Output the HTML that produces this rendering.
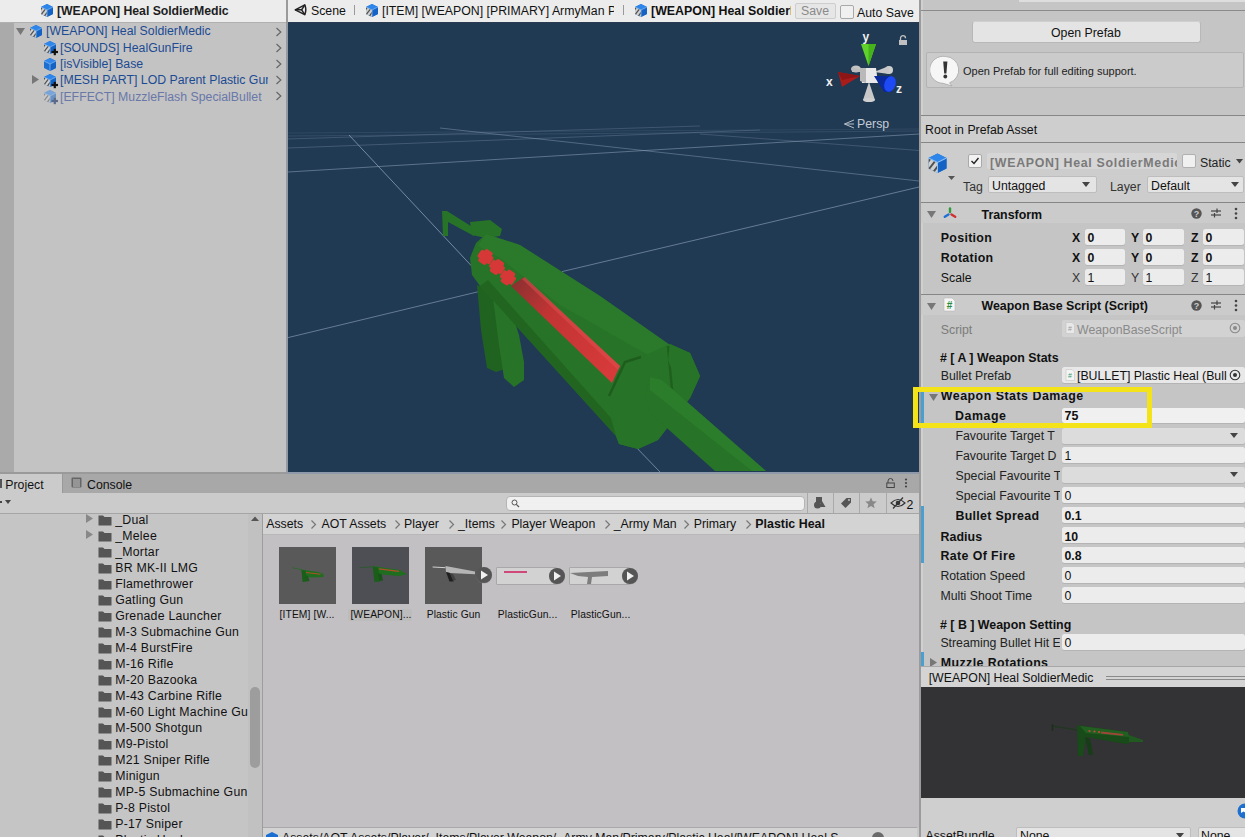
<!DOCTYPE html><html><head><meta charset="utf-8"><style>
html,body{margin:0;padding:0;}
body{width:1245px;height:837px;overflow:hidden;position:relative;background:#c8c8c8;font-family:"Liberation Sans",sans-serif;}
.t{position:absolute;white-space:nowrap;}
</style></head><body><div style="position:absolute;left:0px;top:0px;width:287px;height:22px;background:#ececec;"></div>
<div style="position:absolute;left:0px;top:22px;width:287px;height:1px;background:#b0b0b0;"></div>
<div style="position:absolute;left:0px;top:23px;width:287px;height:449px;background:#c4c3c4;"></div>
<div style="position:absolute;left:0px;top:23px;width:14px;height:449px;background:#aaaaaa;"></div>
<div style="position:absolute;left:286px;top:0px;width:2px;height:474px;background:#9a9a9a;"></div>
<svg style="position:absolute;left:40px;top:2.5px;" width="16" height="16" viewBox="0 0 16 16"><defs><clipPath id="cf1"><polygon points="1,4 7,7 7,14 1,11"/></clipPath></defs><g opacity="1"><polygon points="7,1 13,4 13,11 7,14 1,11 1,4" fill="#1a6fd1"/><polygon points="7,1 13,4 7,7 1,4" fill="#2f86ea"/><polygon points="7,7 13,4 13,11 7,14" fill="#1463c4"/><polygon points="1,4 7,7 7,14 1,11" fill="#d0d0d0"/><g clip-path="url(#cf1)" stroke="#505050" stroke-width="1.3"><line x1="-1" y1="9" x2="4" y2="2"/><line x1="0" y1="13" x2="7" y2="4"/><line x1="3" y1="15" x2="9" y2="7"/><line x1="6" y1="16" x2="10" y2="10"/></g><polyline points="1,4 7,7 13,4" fill="none" stroke="#8fc0f5" stroke-width="0.7"/><line x1="7" y1="7" x2="7" y2="14" stroke="#8fc0f5" stroke-width="0.7"/></g></svg>
<div class="t" style="left:57px;top:5.380000000000001px;font-size:12.3px;line-height:12.3px;color:#1e1e1e;font-weight:bold;letter-spacing:-0.05px">[WEAPON] Heal SoldierMedic</div>
<svg style="position:absolute;left:16px;top:27px;" width="10" height="10" viewBox="0 0 10 10"><polygon points="0,1 9,1 4.5,8" fill="#777"/></svg>
<svg style="position:absolute;left:29px;top:24px;" width="16" height="16" viewBox="0 0 16 16"><defs><clipPath id="cf2"><polygon points="1,4 7,7 7,14 1,11"/></clipPath></defs><g opacity="1"><polygon points="7,1 13,4 13,11 7,14 1,11 1,4" fill="#1a6fd1"/><polygon points="7,1 13,4 7,7 1,4" fill="#2f86ea"/><polygon points="7,7 13,4 13,11 7,14" fill="#1463c4"/><polygon points="1,4 7,7 7,14 1,11" fill="#d0d0d0"/><g clip-path="url(#cf2)" stroke="#505050" stroke-width="1.3"><line x1="-1" y1="9" x2="4" y2="2"/><line x1="0" y1="13" x2="7" y2="4"/><line x1="3" y1="15" x2="9" y2="7"/><line x1="6" y1="16" x2="10" y2="10"/></g><polyline points="1,4 7,7 13,4" fill="none" stroke="#8fc0f5" stroke-width="0.7"/><line x1="7" y1="7" x2="7" y2="14" stroke="#8fc0f5" stroke-width="0.7"/></g></svg>
<div class="t" style="left:46px;top:25.18px;font-size:12.3px;line-height:12.3px;color:#1b4b92;">[WEAPON] Heal SoldierMedic</div>
<svg style="position:absolute;left:43px;top:40px;" width="16" height="16" viewBox="0 0 16 16"><defs><clipPath id="cf3"><polygon points="1,4 7,7 7,14 1,11"/></clipPath></defs><g opacity="1"><polygon points="7,1 13,4 13,11 7,14 1,11 1,4" fill="#1a6fd1"/><polygon points="7,1 13,4 7,7 1,4" fill="#2f86ea"/><polygon points="7,7 13,4 13,11 7,14" fill="#1463c4"/><polygon points="1,4 7,7 7,14 1,11" fill="#d0d0d0"/><g clip-path="url(#cf3)" stroke="#505050" stroke-width="1.3"><line x1="-1" y1="9" x2="4" y2="2"/><line x1="0" y1="13" x2="7" y2="4"/><line x1="3" y1="15" x2="9" y2="7"/><line x1="6" y1="16" x2="10" y2="10"/></g><polyline points="1,4 7,7 13,4" fill="none" stroke="#8fc0f5" stroke-width="0.7"/><line x1="7" y1="7" x2="7" y2="14" stroke="#8fc0f5" stroke-width="0.7"/></g><g stroke="#111" stroke-width="2.2"><line x1="8.5" y1="12" x2="15" y2="12"/><line x1="11.8" y1="8.8" x2="11.8" y2="15.2"/></g></svg>
<div class="t" style="left:60px;top:41.68px;font-size:12.3px;line-height:12.3px;color:#1b4b92;">[SOUNDS] HealGunFire</div>
<svg style="position:absolute;left:43px;top:57px;" width="16" height="16" viewBox="0 0 16 16"><defs><clipPath id="cf4"><polygon points="1,4 7,7 7,14 1,11"/></clipPath></defs><g opacity="1"><polygon points="7,1 13,4 13,11 7,14 1,11 1,4" fill="#1a6fd1"/><polygon points="7,1 13,4 7,7 1,4" fill="#2f86ea"/><polygon points="7,7 13,4 13,11 7,14" fill="#1463c4"/><polyline points="1,4 7,7 13,4" fill="none" stroke="#8fc0f5" stroke-width="0.7"/><line x1="7" y1="7" x2="7" y2="14" stroke="#8fc0f5" stroke-width="0.7"/></g></svg>
<div class="t" style="left:60px;top:57.980000000000004px;font-size:12.3px;line-height:12.3px;color:#1b4b92;">[isVisible] Base</div>
<svg style="position:absolute;left:31px;top:75px;" width="10" height="10" viewBox="0 0 10 10"><polygon points="1,0 8,4.5 1,9" fill="#777"/></svg>
<svg style="position:absolute;left:43px;top:73px;" width="16" height="16" viewBox="0 0 16 16"><defs><clipPath id="cf5"><polygon points="1,4 7,7 7,14 1,11"/></clipPath></defs><g opacity="1"><polygon points="7,1 13,4 13,11 7,14 1,11 1,4" fill="#1a6fd1"/><polygon points="7,1 13,4 7,7 1,4" fill="#2f86ea"/><polygon points="7,7 13,4 13,11 7,14" fill="#1463c4"/><polygon points="1,4 7,7 7,14 1,11" fill="#d0d0d0"/><g clip-path="url(#cf5)" stroke="#505050" stroke-width="1.3"><line x1="-1" y1="9" x2="4" y2="2"/><line x1="0" y1="13" x2="7" y2="4"/><line x1="3" y1="15" x2="9" y2="7"/><line x1="6" y1="16" x2="10" y2="10"/></g><polyline points="1,4 7,7 13,4" fill="none" stroke="#8fc0f5" stroke-width="0.7"/><line x1="7" y1="7" x2="7" y2="14" stroke="#8fc0f5" stroke-width="0.7"/></g><g stroke="#111" stroke-width="2.2"><line x1="8.5" y1="12" x2="15" y2="12"/><line x1="11.8" y1="8.8" x2="11.8" y2="15.2"/></g></svg>
<div style="position:absolute;left:60px;top:70px;width:208px;height:18px;overflow:hidden">
<div class="t" style="left:0px;top:4.08px;font-size:12.3px;line-height:12.3px;color:#1b4b92;">[MESH PART] LOD Parent Plastic Gun</div>
</div>
<svg style="position:absolute;left:43px;top:89px;" width="16" height="16" viewBox="0 0 16 16"><defs><clipPath id="cf6"><polygon points="1,4 7,7 7,14 1,11"/></clipPath></defs><g opacity="0.5"><polygon points="7,1 13,4 13,11 7,14 1,11 1,4" fill="#1a6fd1"/><polygon points="7,1 13,4 7,7 1,4" fill="#2f86ea"/><polygon points="7,7 13,4 13,11 7,14" fill="#1463c4"/><polygon points="1,4 7,7 7,14 1,11" fill="#d0d0d0"/><g clip-path="url(#cf6)" stroke="#505050" stroke-width="1.3"><line x1="-1" y1="9" x2="4" y2="2"/><line x1="0" y1="13" x2="7" y2="4"/><line x1="3" y1="15" x2="9" y2="7"/><line x1="6" y1="16" x2="10" y2="10"/></g><polyline points="1,4 7,7 13,4" fill="none" stroke="#8fc0f5" stroke-width="0.7"/><line x1="7" y1="7" x2="7" y2="14" stroke="#8fc0f5" stroke-width="0.7"/></g><g stroke="#5a6a8a" stroke-width="2.2"><line x1="8.5" y1="12" x2="15" y2="12"/><line x1="11.8" y1="8.8" x2="11.8" y2="15.2"/></g></svg>
<div class="t" style="left:60px;top:90.58px;font-size:12.3px;line-height:12.3px;color:#6878a8;">[EFFECT] MuzzleFlash SpecialBullet</div>
<svg style="position:absolute;left:275px;top:26.8px;" width="8" height="10" viewBox="0 0 8 10"><polyline points="1.5,1 5.8,5 1.5,9" fill="none" stroke="#666" stroke-width="1.2"/></svg>
<svg style="position:absolute;left:275px;top:42.8px;" width="8" height="10" viewBox="0 0 8 10"><polyline points="1.5,1 5.8,5 1.5,9" fill="none" stroke="#666" stroke-width="1.2"/></svg>
<svg style="position:absolute;left:275px;top:58.6px;" width="8" height="10" viewBox="0 0 8 10"><polyline points="1.5,1 5.8,5 1.5,9" fill="none" stroke="#666" stroke-width="1.2"/></svg>
<svg style="position:absolute;left:275px;top:74.6px;" width="8" height="10" viewBox="0 0 8 10"><polyline points="1.5,1 5.8,5 1.5,9" fill="none" stroke="#666" stroke-width="1.2"/></svg>
<svg style="position:absolute;left:275px;top:90.8px;" width="8" height="10" viewBox="0 0 8 10"><polyline points="1.5,1 5.8,5 1.5,9" fill="none" stroke="#666" stroke-width="1.2"/></svg>
<div style="position:absolute;left:288px;top:0px;width:631px;height:22px;background:#ececec;"></div>
<div style="position:absolute;left:288px;top:22px;width:631px;height:1px;background:#2a3a50;"></div>
<svg style="position:absolute;left:293.5px;top:3.5px;" width="14" height="12" viewBox="0 0 14 12"><g fill="none" stroke="#222" stroke-width="1.5" stroke-linejoin="round"><path d="M1.2,5.8 L10.8,0.9 Q12.8,5.8 10.8,10.7 Z"/><polyline points="1.2,5.8 7.6,5.8 10.8,0.9"/><line x1="7.6" y1="5.8" x2="10.8" y2="10.7"/></g></svg>
<div class="t" style="left:311px;top:5.08px;font-size:12.3px;line-height:12.3px;color:#111;">Scene</div>
<div style="position:absolute;left:354px;top:5px;width:1px;height:10px;background:#999;"></div>
<svg style="position:absolute;left:365px;top:3px;" width="16" height="16" viewBox="0 0 16 16"><defs><clipPath id="cf7"><polygon points="1,4 7,7 7,14 1,11"/></clipPath></defs><g opacity="1"><polygon points="7,1 13,4 13,11 7,14 1,11 1,4" fill="#1a6fd1"/><polygon points="7,1 13,4 7,7 1,4" fill="#2f86ea"/><polygon points="7,7 13,4 13,11 7,14" fill="#1463c4"/><polygon points="1,4 7,7 7,14 1,11" fill="#d0d0d0"/><g clip-path="url(#cf7)" stroke="#505050" stroke-width="1.3"><line x1="-1" y1="9" x2="4" y2="2"/><line x1="0" y1="13" x2="7" y2="4"/><line x1="3" y1="15" x2="9" y2="7"/><line x1="6" y1="16" x2="10" y2="10"/></g><polyline points="1,4 7,7 13,4" fill="none" stroke="#8fc0f5" stroke-width="0.7"/><line x1="7" y1="7" x2="7" y2="14" stroke="#8fc0f5" stroke-width="0.7"/></g></svg>
<div style="position:absolute;left:382px;top:0;width:232px;height:22px;overflow:hidden">
<div class="t" style="left:0px;top:5.08px;font-size:12.3px;line-height:12.3px;color:#111;">[ITEM] [WEAPON] [PRIMARY] ArmyMan Primary</div>
</div>
<div style="position:absolute;left:623px;top:5px;width:1px;height:10px;background:#999;"></div>
<svg style="position:absolute;left:634px;top:3px;" width="16" height="16" viewBox="0 0 16 16"><defs><clipPath id="cf8"><polygon points="1,4 7,7 7,14 1,11"/></clipPath></defs><g opacity="1"><polygon points="7,1 13,4 13,11 7,14 1,11 1,4" fill="#1a6fd1"/><polygon points="7,1 13,4 7,7 1,4" fill="#2f86ea"/><polygon points="7,7 13,4 13,11 7,14" fill="#1463c4"/><polygon points="1,4 7,7 7,14 1,11" fill="#d0d0d0"/><g clip-path="url(#cf8)" stroke="#505050" stroke-width="1.3"><line x1="-1" y1="9" x2="4" y2="2"/><line x1="0" y1="13" x2="7" y2="4"/><line x1="3" y1="15" x2="9" y2="7"/><line x1="6" y1="16" x2="10" y2="10"/></g><polyline points="1,4 7,7 13,4" fill="none" stroke="#8fc0f5" stroke-width="0.7"/><line x1="7" y1="7" x2="7" y2="14" stroke="#8fc0f5" stroke-width="0.7"/></g></svg>
<div style="position:absolute;left:651px;top:0;width:140px;height:22px;overflow:hidden">
<div class="t" style="left:0px;top:5.0px;font-size:12.4px;line-height:12.4px;color:#111;font-weight:bold;">[WEAPON] Heal SoldierMedic</div>
</div>
<div style="position:absolute;left:795px;top:3px;width:41px;height:16px;background:#e6e6e6;border:1px solid #cdcdcd;box-sizing:border-box;border-radius:2px"></div>
<div class="t" style="left:801px;top:5.08px;font-size:12.3px;line-height:12.3px;color:#8a8a8a;">Save</div>
<div style="position:absolute;left:840px;top:5px;width:14px;height:14px;background:#f0f0f0;border:1px solid #a8a8a8;box-sizing:border-box;border-radius:2px"></div>
<div class="t" style="left:857px;top:7.279999999999999px;font-size:12.3px;line-height:12.3px;color:#111;">Auto Save</div>
<div style="position:absolute;left:288px;top:23px;width:631px;height:449px;background:#213a54;"></div>
<svg style="position:absolute;left:288px;top:23px;" width="631" height="449" viewBox="0 0 631 449"><svg viewBox="288 23 631 449" width="631" height="449" overflow="hidden"><line x1="288" y1="133" x2="919" y2="129" stroke="#8fa3ba" stroke-width="0.9" fill="none" opacity="0.15"/><line x1="288" y1="136" x2="919" y2="131" stroke="#8fa3ba" stroke-width="0.9" fill="none" opacity="0.2"/><line x1="288" y1="139" x2="700" y2="126" stroke="#8fa3ba" stroke-width="0.9" fill="none" opacity="0.3"/><line x1="288" y1="148" x2="760" y2="130" stroke="#8fa3ba" stroke-width="0.9" fill="none" opacity="0.35"/><line x1="288" y1="172" x2="919" y2="134" stroke="#8fa3ba" stroke-width="0.9" fill="none" opacity="0.6"/><line x1="349" y1="135" x2="480" y2="275" stroke="#8fa3ba" stroke-width="0.9" fill="none" opacity="0.85"/><line x1="633" y1="444" x2="660" y2="472" stroke="#8fa3ba" stroke-width="0.9" fill="none" opacity="0.8"/><line x1="440" y1="128" x2="919" y2="181" stroke="#8fa3ba" stroke-width="0.9" fill="none" opacity="0.5"/><line x1="700" y1="134" x2="919" y2="150.5" stroke="#8fa3ba" stroke-width="0.9" fill="none" opacity="0.3"/><line x1="562" y1="271.6" x2="919" y2="187" stroke="#8fa3ba" stroke-width="0.9" fill="none" opacity="0.7"/><line x1="288" y1="337.6" x2="480" y2="291.3" stroke="#8fa3ba" stroke-width="0.9" fill="none" opacity="0.7"/><polygon points="477,285 495,292 505,330 505,369 496,372 487,368 481,330" fill="#206220"/><polygon points="493,298 508,300 519,335 524,362 524,380 514,387 504,378 499,345" fill="#277327"/><polygon points="442,211 447,211 474,228 474,236 448,222 448,236 443,236" fill="#277327"/><polygon points="470,222 490,220 502,229 500,236 486,238 472,235" fill="#277327"/><polygon points="486,234 520,245 600,296 670,345 690,353 700,376 690,398 658,440 638,449 619,444 616,436 480,286 472,275 470,258 476,243" fill="#277327"/><polygon points="486,234 520,245 600,296 670,345 650,356 560,305 500,258 478,246" fill="#2f822f" opacity="0.5"/><polygon points="480,286 616,436 611,418 488,280" fill="#206220" opacity="0.8"/><defs><linearGradient id="rs" x1="512" y1="280" x2="618" y2="374" gradientUnits="userSpaceOnUse"><stop offset="0" stop-color="#8a3030"/><stop offset="0.35" stop-color="#c23434"/><stop offset="1" stop-color="#d83a3a"/></linearGradient></defs><polygon points="511,286 524,277 620,366 612,383" fill="url(#rs)"/><polygon points="522,279 525,277 620,366 618,370" fill="#e05050" opacity="0.5"/><g transform="rotate(35 485.5 257)" fill="#d63838"><rect x="478.0" y="252.5" width="15" height="9" rx="2"/><rect x="481.0" y="249.5" width="9" height="15" rx="2"/></g><g transform="rotate(35 497 267)" fill="#d63838"><rect x="489.5" y="262.5" width="15" height="9" rx="2"/><rect x="492.5" y="259.5" width="9" height="15" rx="2"/></g><g transform="rotate(35 508 277.5)" fill="#d63838"><rect x="500.5" y="273.0" width="15" height="9" rx="2"/><rect x="503.5" y="270.0" width="9" height="15" rx="2"/></g><polygon points="609,396 625,362 641,357 670,344 690,353 700,376 690,398 658,440 638,449 619,444 616,436" fill="#277327"/><polyline points="609,396 625,362 641,357" fill="none" stroke="#174a17" stroke-width="2.5" opacity="0.55"/><line x1="668" y1="346" x2="672" y2="390" stroke="#174a17" stroke-width="2.5" opacity="0.45"/><polygon points="670,344 690,353 700,376 690,398 676,380 668,360" fill="#277327"/><polygon points="650,377 662,380 766,471 715,471 650,413 645,395" fill="#277327"/><polygon points="650,377 662,380 766,471 752,471 650,390" fill="#2f822f" opacity="0.6"/></svg></svg>
<svg style="position:absolute;left:820px;top:25px;" width="100" height="110" viewBox="0 0 100 110"><svg viewBox="820 25 100 110" width="100" height="110"><polygon points="861,44 876,44 868.5,66" fill="#5fd12a"/><polygon points="868.5,44 876,44 868.5,66" fill="#46b21b"/><ellipse cx="856" cy="69" rx="5" ry="3.5" fill="#c4c4c4"/><polygon points="852,67 866,72 852,72" fill="#bdbdbd"/><ellipse cx="889" cy="70" rx="4" ry="4" fill="#cfcfcf"/><polygon points="874,72 889,66 889,74" fill="#c9c9c9"/><polygon points="863,100 875,100 869,82" fill="#c8c8c8"/><ellipse cx="869" cy="100" rx="6" ry="2" fill="#d0d0d0"/><polygon points="838,72 842,87 860,76" fill="#a81c1c"/><polygon points="838,72 860,76 842,80" fill="#8e1515"/><polygon points="860,68 876,68 878,83 862,83" fill="#e9e9e9"/><polygon points="860,68 866,68 866,83 860,81" fill="#b9b9b9"/><polygon points="874,76 890,76 892,92 884,92" fill="#0b2a9c"/><ellipse cx="890" cy="84" rx="5.5" ry="8" fill="#1e4af5" transform="rotate(20 890 84)"/></svg></svg>
<div class="t" style="left:862.5px;top:31.310000000000002px;font-size:12px;line-height:12px;color:#f0f0f0;font-weight:bold;">y</div>
<div class="t" style="left:826px;top:76.31px;font-size:12px;line-height:12px;color:#f0f0f0;font-weight:bold;">x</div>
<div class="t" style="left:896px;top:83.31px;font-size:12px;line-height:12px;color:#f0f0f0;font-weight:bold;">z</div>
<svg style="position:absolute;left:898px;top:35px;" width="10" height="11" viewBox="0 0 10 11"><path d="M2.5,5 V3.2 A2.5,2.5 0 0 1 7.5,3.2" fill="none" stroke="#c0c0c0" stroke-width="1.3"/><rect x="1" y="5" width="8" height="5" fill="#c0c0c0"/></svg>
<svg style="position:absolute;left:843px;top:119px;" width="12" height="10" viewBox="0 0 12 10"><polyline points="11,1 1.5,5 11,9" fill="none" stroke="#b7c0cc" stroke-width="1"/><line x1="1.5" y1="5" x2="11" y2="5" stroke="#b7c0cc" stroke-width="1"/></svg>
<div class="t" style="left:857px;top:118.08px;font-size:12.3px;line-height:12.3px;color:#c4ccd6;">Persp</div>
<div style="position:absolute;left:919px;top:0px;width:2px;height:837px;background:#9b9b9b;"></div>
<div style="position:absolute;left:921px;top:0px;width:324px;height:666px;background:#c4c5c4;"></div>
<div style="position:absolute;left:921px;top:0px;width:1.5px;height:666px;background:#d0d0d0;"></div>
<div style="position:absolute;left:1019px;top:0px;width:226px;height:1.5px;background:#dedede;"></div>
<div style="position:absolute;left:921px;top:10px;width:324px;height:1px;background:#8a8b8a;"></div>
<div style="position:absolute;left:972px;top:21px;width:229px;height:22px;background:#e4e4e4;border:1px solid #b8b8b8;border-top-color:#cfcfcf;box-sizing:border-box;border-radius:3px"></div>
<div class="t" style="left:1051px;top:26.58px;font-size:12.3px;line-height:12.3px;color:#111;">Open Prefab</div>
<div style="position:absolute;left:926px;top:52px;width:318px;height:36px;background:#cbcbcb;border:1px solid #b3b3b3;box-sizing:border-box;border-radius:2px"></div>
<svg style="position:absolute;left:930px;top:54px;" width="32" height="33" viewBox="0 0 32 33"><path d="M15.5,2.5 A13.5,13.5 0 1 0 13,29.3 L22,32 L19.5,28.8 A13.5,13.5 0 0 0 15.5,2.5 Z" fill="#f6f6f6" stroke="#a8a8a8" stroke-width="0.8"/><path d="M13.2,7.5 H17.4 L16.4,19.5 H14.2 Z" fill="#333"/><circle cx="15.3" cy="22.5" r="1.9" fill="#333"/></svg>
<div class="t" style="left:963px;top:65.57px;font-size:11px;line-height:11px;color:#222;">Open Prefab for full editing support.</div>
<div style="position:absolute;left:921px;top:116px;width:324px;height:27px;background:#cdcecd;"></div>
<div style="position:absolute;left:921px;top:115px;width:324px;height:1px;background:#858685;"></div>
<div class="t" style="left:925px;top:123.58px;font-size:12.3px;line-height:12.3px;color:#111;">Root in Prefab Asset</div>
<div style="position:absolute;left:921px;top:142px;width:324px;height:1px;background:#858685;"></div>
<div style="position:absolute;left:921px;top:143px;width:324px;height:59px;background:#cccdcc;"></div>
<svg style="position:absolute;left:926px;top:151px;" width="30" height="30" viewBox="0 0 30 30"><g transform="translate(1,1) scale(1.5)"><defs><clipPath id="cf9"><polygon points="1,4 7,7 7,14 1,11"/></clipPath></defs><g opacity="1"><polygon points="7,1 13,4 13,11 7,14 1,11 1,4" fill="#1a6fd1"/><polygon points="7,1 13,4 7,7 1,4" fill="#2f86ea"/><polygon points="7,7 13,4 13,11 7,14" fill="#1463c4"/><polygon points="1,4 7,7 7,14 1,11" fill="#d0d0d0"/><g clip-path="url(#cf9)" stroke="#505050" stroke-width="1.3"><line x1="-1" y1="9" x2="4" y2="2"/><line x1="0" y1="13" x2="7" y2="4"/><line x1="3" y1="15" x2="9" y2="7"/><line x1="6" y1="16" x2="10" y2="10"/></g><polyline points="1,4 7,7 13,4" fill="none" stroke="#8fc0f5" stroke-width="0.7"/><line x1="7" y1="7" x2="7" y2="14" stroke="#8fc0f5" stroke-width="0.7"/></g></g><polygon points="22,25 29,25 25.5,29" fill="#555"/></svg>
<div style="position:absolute;left:968px;top:154px;width:14px;height:14px;background:#f2f2f2;border:1px solid #aaa;box-sizing:border-box;border-radius:2px"></div>
<svg style="position:absolute;left:969px;top:155px;" width="12" height="12" viewBox="0 0 12 12"><polyline points="2.5,6 5,8.5 9.5,3" fill="none" stroke="#222" stroke-width="1.4"/></svg>
<div style="position:absolute;left:987px;top:152.5px;width:190px;height:16.5px;background:#d6d6d6;border-radius:2px"></div>
<div style="position:absolute;left:987px;top:150px;width:190px;height:20px;overflow:hidden">
<div class="t" style="left:3px;top:7.0px;font-size:12.4px;line-height:12.4px;color:#7a7a7a;font-weight:bold;letter-spacing:0.68px">[WEAPON] Heal SoldierMedic</div>
</div>
<div style="position:absolute;left:1182px;top:154px;width:14px;height:14px;background:#f0f0f0;border:1px solid #b0b0b0;box-sizing:border-box;border-radius:2px"></div>
<div class="t" style="left:1200px;top:156.58px;font-size:12.3px;line-height:12.3px;color:#222;">Static</div>
<svg style="position:absolute;left:1235.5px;top:159px;" width="8" height="5" viewBox="0 0 8 5"><polygon points="0,0 7,0 3.5,4.5" fill="#444"/></svg>
<div class="t" style="left:963px;top:180.58px;font-size:12.3px;line-height:12.3px;color:#333;">Tag</div>
<div style="position:absolute;left:988px;top:176px;width:109px;height:17px;background:#e4e4e4;border:1px solid #bdbdbd;box-sizing:border-box;border-radius:2px"></div>
<div class="t" style="left:992px;top:180.08px;font-size:12.3px;line-height:12.3px;color:#111;">Untagged</div>
<svg style="position:absolute;left:1082px;top:182px;" width="9" height="6" viewBox="0 0 9 6"><polygon points="0,0 8,0 4,5" fill="#444"/></svg>
<div class="t" style="left:1110px;top:180.58px;font-size:12.3px;line-height:12.3px;color:#333;">Layer</div>
<div style="position:absolute;left:1147px;top:176px;width:97px;height:17px;background:#e4e4e4;border:1px solid #bdbdbd;box-sizing:border-box;border-radius:2px"></div>
<div class="t" style="left:1151px;top:180.08px;font-size:12.3px;line-height:12.3px;color:#111;">Default</div>
<svg style="position:absolute;left:1231px;top:182px;" width="9" height="6" viewBox="0 0 9 6"><polygon points="0,0 8,0 4,5" fill="#444"/></svg>
<div style="position:absolute;left:921px;top:202px;width:324px;height:1px;background:#868686;"></div>
<div style="position:absolute;left:921px;top:203px;width:324px;height:20px;background:#cacbca;"></div>
<svg style="position:absolute;left:927px;top:210px;" width="10" height="10" viewBox="0 0 10 10"><polygon points="0,1 9,1 4.5,8" fill="#777"/></svg>
<svg style="position:absolute;left:943px;top:207px" width="14" height="12" viewBox="0 0 14 12"><g stroke-width="2.4" stroke-linecap="round"><line x1="7" y1="1.5" x2="7" y2="5" stroke="#2e9a3a"/><line x1="5.5" y1="7.5" x2="1.8" y2="9.8" stroke="#1e6fd6"/><line x1="8.5" y1="7.5" x2="12.2" y2="9.8" stroke="#d03030"/></g></svg>
<div class="t" style="left:981.5px;top:208.5px;font-size:12.4px;line-height:12.4px;color:#111;font-weight:bold;">Transform</div>
<svg style="position:absolute;left:1191px;top:208px;" width="11" height="11" viewBox="0 0 11 11"><circle cx="5.5" cy="5.5" r="5.2" fill="#555"/><text x="5.5" y="8.8" text-anchor="middle" font-family="Liberation Sans" font-weight="bold" font-size="9" fill="#cbcbcb">?</text></svg>
<svg style="position:absolute;left:1210px;top:207px;" width="12" height="12" viewBox="0 0 12 12"><g stroke="#444" stroke-width="1.2"><line x1="1" y1="4" x2="11" y2="4"/><line x1="1" y1="8" x2="11" y2="8"/><line x1="7" y1="1.5" x2="7" y2="6"/><line x1="4.5" y1="6" x2="4.5" y2="10.5"/></g></svg>
<svg style="position:absolute;left:1234px;top:207px;" width="4" height="13" viewBox="0 0 4 13"><circle cx="2" cy="2" r="1.3" fill="#444"/><circle cx="2" cy="6.5" r="1.3" fill="#444"/><circle cx="2" cy="11" r="1.3" fill="#444"/></svg>
<div class="t" style="left:940.8px;top:232.1px;font-size:12.4px;line-height:12.4px;color:#111;font-weight:bold;letter-spacing:0.3px">Position</div>
<div class="t" style="left:1072px;top:232.18px;font-size:12.3px;line-height:12.3px;color:#111;font-weight:bold;">X</div>
<div style="position:absolute;left:1085px;top:229px;width:40px;height:16px;background:#ececec;border-radius:2.5px;box-shadow:0 1px 0 #b4b4b4"></div>
<div class="t" style="left:1087.5px;top:232.18px;font-size:12.3px;line-height:12.3px;color:#111;font-weight:bold;">0</div>
<div class="t" style="left:1131px;top:232.18px;font-size:12.3px;line-height:12.3px;color:#111;font-weight:bold;">Y</div>
<div style="position:absolute;left:1143px;top:229px;width:41px;height:16px;background:#ececec;border-radius:2.5px;box-shadow:0 1px 0 #b4b4b4"></div>
<div class="t" style="left:1145.5px;top:232.18px;font-size:12.3px;line-height:12.3px;color:#111;font-weight:bold;">0</div>
<div class="t" style="left:1191px;top:232.18px;font-size:12.3px;line-height:12.3px;color:#111;font-weight:bold;">Z</div>
<div style="position:absolute;left:1203px;top:229px;width:41px;height:16px;background:#ececec;border-radius:2.5px;box-shadow:0 1px 0 #b4b4b4"></div>
<div class="t" style="left:1205.5px;top:232.18px;font-size:12.3px;line-height:12.3px;color:#111;font-weight:bold;">0</div>
<div class="t" style="left:940.8px;top:252.10000000000002px;font-size:12.4px;line-height:12.4px;color:#111;font-weight:bold;letter-spacing:0.3px">Rotation</div>
<div class="t" style="left:1072px;top:252.18000000000004px;font-size:12.3px;line-height:12.3px;color:#111;font-weight:bold;">X</div>
<div style="position:absolute;left:1085px;top:249px;width:40px;height:16px;background:#ececec;border-radius:2.5px;box-shadow:0 1px 0 #b4b4b4"></div>
<div class="t" style="left:1087.5px;top:252.18000000000004px;font-size:12.3px;line-height:12.3px;color:#111;font-weight:bold;">0</div>
<div class="t" style="left:1131px;top:252.18000000000004px;font-size:12.3px;line-height:12.3px;color:#111;font-weight:bold;">Y</div>
<div style="position:absolute;left:1143px;top:249px;width:41px;height:16px;background:#ececec;border-radius:2.5px;box-shadow:0 1px 0 #b4b4b4"></div>
<div class="t" style="left:1145.5px;top:252.18000000000004px;font-size:12.3px;line-height:12.3px;color:#111;font-weight:bold;">0</div>
<div class="t" style="left:1191px;top:252.18000000000004px;font-size:12.3px;line-height:12.3px;color:#111;font-weight:bold;">Z</div>
<div style="position:absolute;left:1203px;top:249px;width:41px;height:16px;background:#ececec;border-radius:2.5px;box-shadow:0 1px 0 #b4b4b4"></div>
<div class="t" style="left:1205.5px;top:252.18000000000004px;font-size:12.3px;line-height:12.3px;color:#111;font-weight:bold;">0</div>
<div class="t" style="left:940.8px;top:272.18px;font-size:12.3px;line-height:12.3px;color:#111;">Scale</div>
<div class="t" style="left:1072px;top:272.18px;font-size:12.3px;line-height:12.3px;color:#333;">X</div>
<div style="position:absolute;left:1085px;top:269px;width:40px;height:16px;background:#ececec;border-radius:2.5px;box-shadow:0 1px 0 #b4b4b4"></div>
<div class="t" style="left:1087.5px;top:272.18px;font-size:12.3px;line-height:12.3px;color:#111;">1</div>
<div class="t" style="left:1131px;top:272.18px;font-size:12.3px;line-height:12.3px;color:#333;">Y</div>
<div style="position:absolute;left:1143px;top:269px;width:41px;height:16px;background:#ececec;border-radius:2.5px;box-shadow:0 1px 0 #b4b4b4"></div>
<div class="t" style="left:1145.5px;top:272.18px;font-size:12.3px;line-height:12.3px;color:#111;">1</div>
<div class="t" style="left:1191px;top:272.18px;font-size:12.3px;line-height:12.3px;color:#333;">Z</div>
<div style="position:absolute;left:1203px;top:269px;width:41px;height:16px;background:#ececec;border-radius:2.5px;box-shadow:0 1px 0 #b4b4b4"></div>
<div class="t" style="left:1205.5px;top:272.18px;font-size:12.3px;line-height:12.3px;color:#111;">1</div>
<div style="position:absolute;left:921px;top:293.5px;width:324px;height:1px;background:#868686;"></div>
<div style="position:absolute;left:921px;top:294.5px;width:324px;height:20px;background:#cacbca;"></div>
<svg style="position:absolute;left:927px;top:301.5px;" width="10" height="10" viewBox="0 0 10 10"><polygon points="0,1 9,1 4.5,8" fill="#777"/></svg>
<svg style="position:absolute;left:943px;top:297px" width="13" height="15" viewBox="0 0 13 15"><path d="M1,1 H9 L12,4 V14 H1 Z" fill="#f6f6f6" stroke="#bbb" stroke-width="0.6"/><text x="6.5" y="12" text-anchor="middle" font-family="Liberation Sans" font-weight="bold" font-size="10" fill="#2a8a3a">#</text></svg>
<div class="t" style="left:981.5px;top:300.0px;font-size:12.4px;line-height:12.4px;color:#111;font-weight:bold;">Weapon Base Script (Script)</div>
<svg style="position:absolute;left:1191px;top:299.5px;" width="11" height="11" viewBox="0 0 11 11"><circle cx="5.5" cy="5.5" r="5.2" fill="#555"/><text x="5.5" y="8.8" text-anchor="middle" font-family="Liberation Sans" font-weight="bold" font-size="9" fill="#cbcbcb">?</text></svg>
<svg style="position:absolute;left:1210px;top:298.5px;" width="12" height="12" viewBox="0 0 12 12"><g stroke="#444" stroke-width="1.2"><line x1="1" y1="4" x2="11" y2="4"/><line x1="1" y1="8" x2="11" y2="8"/><line x1="7" y1="1.5" x2="7" y2="6"/><line x1="4.5" y1="6" x2="4.5" y2="10.5"/></g></svg>
<svg style="position:absolute;left:1234px;top:298.5px;" width="4" height="13" viewBox="0 0 4 13"><circle cx="2" cy="2" r="1.3" fill="#444"/><circle cx="2" cy="6.5" r="1.3" fill="#444"/><circle cx="2" cy="11" r="1.3" fill="#444"/></svg>
<div class="t" style="left:940.8px;top:323.58px;font-size:12.3px;line-height:12.3px;color:#7c7c7c;">Script</div>
<div style="position:absolute;left:1062px;top:320px;width:183px;height:16.5px;background:#d2d2d2;border-radius:2px"></div>
<svg style="position:absolute;left:1065px;top:322px;" width="10" height="12" viewBox="0 0 10 12"><path d="M1,0.5 H7 L9.5,3 V11.5 H1 Z" fill="#e8e8e8" stroke="#c4c4c4" stroke-width="0.6"/><text x="5" y="9" text-anchor="middle" font-family="Liberation Sans" font-size="7" fill="#999">#</text></svg>
<div class="t" style="left:1077px;top:323.58px;font-size:12.3px;line-height:12.3px;color:#8a8a8a;">WeaponBaseScript</div>
<svg style="position:absolute;left:1229px;top:322px;" width="12" height="12" viewBox="0 0 12 12"><circle cx="6" cy="6" r="4.8" fill="none" stroke="#8a8a8a" stroke-width="1.1"/><circle cx="6" cy="6" r="2" fill="#8a8a8a"/></svg>
<div class="t" style="left:940px;top:352.1px;font-size:12.4px;line-height:12.4px;color:#111;font-weight:bold;"># [ A ] Weapon Stats</div>
<div class="t" style="left:940.8px;top:370.08px;font-size:12.3px;line-height:12.3px;color:#222;">Bullet Prefab</div>
<div style="position:absolute;left:1062px;top:367px;width:183px;height:16px;background:#e8e8e8;border-radius:2.5px;box-shadow:0 1px 0 #b4b4b4"></div>
<svg style="position:absolute;left:1065px;top:369px;" width="10" height="12" viewBox="0 0 10 12"><path d="M1,0.5 H7 L9.5,3 V11.5 H1 Z" fill="#f4f4f4" stroke="#c4c4c4" stroke-width="0.6"/><text x="5" y="9" text-anchor="middle" font-family="Liberation Sans" font-size="7" fill="#3a9a6a">#</text></svg>
<div style="position:absolute;left:1077px;top:365px;width:150px;height:18px;overflow:hidden">
<div class="t" style="left:0px;top:5.08px;font-size:12.3px;line-height:12.3px;color:#111;">[BULLET] Plastic Heal (Bullet)</div>
</div>
<svg style="position:absolute;left:1229px;top:369px;" width="12" height="12" viewBox="0 0 12 12"><circle cx="6" cy="6" r="4.8" fill="none" stroke="#333" stroke-width="1.1"/><circle cx="6" cy="6" r="2" fill="#333"/></svg>
<div style="position:absolute;left:920.5px;top:387px;width:3px;height:38px;background:#4a9fd0;"></div>
<div style="position:absolute;left:920.5px;top:506px;width:3px;height:57px;background:#4a9fd0;"></div>
<div style="position:absolute;left:920.5px;top:652px;width:3px;height:14px;background:#4a9fd0;"></div>
<svg style="position:absolute;left:929px;top:393px;" width="10" height="10" viewBox="0 0 10 10"><polygon points="0,1 9,1 4.5,8" fill="#777"/></svg>
<div class="t" style="left:940.8px;top:390.1px;font-size:12.4px;line-height:12.4px;color:#111;font-weight:bold;letter-spacing:0.5px">Weapon Stats Damage</div>
<div class="t" style="left:955px;top:410.2px;font-size:12.4px;line-height:12.4px;color:#111;font-weight:bold;letter-spacing:0.55px">Damage</div>
<div style="position:absolute;left:1062px;top:407.5px;width:183px;height:15.5px;background:#f0f0f0;border-radius:2.5px;box-shadow:0 1px 0 #b4b4b4"></div>
<div class="t" style="left:1064.5px;top:410.2px;font-size:12.4px;line-height:12.4px;color:#111;font-weight:bold;">75</div>
<div style="position:absolute;left:955.5px;top:425.4px;width:104.5px;height:18px;overflow:hidden">
<div class="t" style="left:0px;top:4.58px;font-size:12.3px;line-height:12.3px;color:#222;">Favourite Target T</div>
</div>
<div style="position:absolute;left:1062px;top:428px;width:183px;height:16px;background:#dcdcdc;border-radius:2.5px;box-shadow:0 1px 0 #b4b4b4"></div>
<svg style="position:absolute;left:1230px;top:433px;" width="9" height="6" viewBox="0 0 9 6"><polygon points="0,0 8,0 4,5" fill="#444"/></svg>
<div style="position:absolute;left:955.5px;top:445.4px;width:104.5px;height:18px;overflow:hidden">
<div class="t" style="left:0px;top:4.58px;font-size:12.3px;line-height:12.3px;color:#222;">Favourite Target D</div>
</div>
<div style="position:absolute;left:1062px;top:447px;width:183px;height:16px;background:#ececec;border-radius:2.5px;box-shadow:0 1px 0 #b4b4b4"></div>
<div class="t" style="left:1064.5px;top:449.97999999999996px;font-size:12.3px;line-height:12.3px;color:#111;">1</div>
<div style="position:absolute;left:955.5px;top:465.5px;width:104.5px;height:18px;overflow:hidden">
<div class="t" style="left:0px;top:4.58px;font-size:12.3px;line-height:12.3px;color:#222;">Special Favourite T</div>
</div>
<div style="position:absolute;left:1062px;top:467px;width:183px;height:16px;background:#dcdcdc;border-radius:2.5px;box-shadow:0 1px 0 #b4b4b4"></div>
<svg style="position:absolute;left:1230px;top:472px;" width="9" height="6" viewBox="0 0 9 6"><polygon points="0,0 8,0 4,5" fill="#444"/></svg>
<div style="position:absolute;left:955.5px;top:485.6px;width:104.5px;height:18px;overflow:hidden">
<div class="t" style="left:0px;top:4.58px;font-size:12.3px;line-height:12.3px;color:#222;">Special Favourite T</div>
</div>
<div style="position:absolute;left:1062px;top:487px;width:183px;height:16px;background:#ececec;border-radius:2.5px;box-shadow:0 1px 0 #b4b4b4"></div>
<div class="t" style="left:1064.5px;top:490.18px;font-size:12.3px;line-height:12.3px;color:#111;">0</div>
<div style="position:absolute;left:955.5px;top:505px;width:104.5px;height:18px;overflow:hidden">
<div class="t" style="left:0px;top:4.5px;font-size:12.4px;line-height:12.4px;color:#111;font-weight:bold;letter-spacing:0.3px">Bullet Spread</div>
</div>
<div style="position:absolute;left:1062px;top:507px;width:183px;height:16px;background:#ececec;border-radius:2.5px;box-shadow:0 1px 0 #b4b4b4"></div>
<div class="t" style="left:1064.5px;top:509.58px;font-size:12.3px;line-height:12.3px;color:#111;font-weight:bold;">0.1</div>
<div style="position:absolute;left:940.4px;top:526px;width:119.60000000000002px;height:18px;overflow:hidden">
<div class="t" style="left:0px;top:4.5px;font-size:12.4px;line-height:12.4px;color:#111;font-weight:bold;letter-spacing:0.08px">Radius</div>
</div>
<div style="position:absolute;left:1062px;top:527px;width:183px;height:16px;background:#ececec;border-radius:2.5px;box-shadow:0 1px 0 #b4b4b4"></div>
<div class="t" style="left:1064.5px;top:530.58px;font-size:12.3px;line-height:12.3px;color:#111;font-weight:bold;">10</div>
<div style="position:absolute;left:940.4px;top:545.8px;width:119.60000000000002px;height:18px;overflow:hidden">
<div class="t" style="left:0px;top:4.5px;font-size:12.4px;line-height:12.4px;color:#111;font-weight:bold;letter-spacing:0.4px">Rate Of Fire</div>
</div>
<div style="position:absolute;left:1062px;top:547px;width:183px;height:16px;background:#ececec;border-radius:2.5px;box-shadow:0 1px 0 #b4b4b4"></div>
<div class="t" style="left:1064.5px;top:550.38px;font-size:12.3px;line-height:12.3px;color:#111;font-weight:bold;">0.8</div>
<div style="position:absolute;left:940.4px;top:565.7px;width:119.60000000000002px;height:18px;overflow:hidden">
<div class="t" style="left:0px;top:4.58px;font-size:12.3px;line-height:12.3px;color:#222;">Rotation Speed</div>
</div>
<div style="position:absolute;left:1062px;top:567px;width:183px;height:16px;background:#ececec;border-radius:2.5px;box-shadow:0 1px 0 #b4b4b4"></div>
<div class="t" style="left:1064.5px;top:570.2800000000001px;font-size:12.3px;line-height:12.3px;color:#111;">0</div>
<div style="position:absolute;left:940.4px;top:585.4px;width:119.60000000000002px;height:18px;overflow:hidden">
<div class="t" style="left:0px;top:4.58px;font-size:12.3px;line-height:12.3px;color:#222;">Multi Shoot Time</div>
</div>
<div style="position:absolute;left:1062px;top:587px;width:183px;height:16px;background:#ececec;border-radius:2.5px;box-shadow:0 1px 0 #b4b4b4"></div>
<div class="t" style="left:1064.5px;top:589.98px;font-size:12.3px;line-height:12.3px;color:#111;">0</div>
<div class="t" style="left:940px;top:619.2px;font-size:12.4px;line-height:12.4px;color:#111;font-weight:bold;"># [ B ] Weapon Setting</div>
<div style="position:absolute;left:940.4px;top:632px;width:120px;height:18px;overflow:hidden">
<div class="t" style="left:0px;top:5.18px;font-size:12.3px;line-height:12.3px;color:#222;">Streaming Bullet Hit Effect</div>
</div>
<div style="position:absolute;left:1062px;top:634px;width:183px;height:16px;background:#ececec;border-radius:2.5px;box-shadow:0 1px 0 #b4b4b4"></div>
<div class="t" style="left:1064.5px;top:637.1800000000001px;font-size:12.3px;line-height:12.3px;color:#111;">0</div>
<div style="position:absolute;left:921px;top:652px;width:324px;height:14px;overflow:hidden">
<svg style="position:absolute;left:8px;top:6px;" width="10" height="10" viewBox="0 0 10 10"><polygon points="1,0 8,4.5 1,9" fill="#777"/></svg>
<div class="t" style="left:19.8px;top:4.9px;font-size:12.4px;line-height:12.4px;color:#111;font-weight:bold;letter-spacing:0.4px">Muzzle Rotations</div>
</div>
<div style="position:absolute;left:912.5px;top:387.3px;width:239px;height:40.7px;background:transparent;border:5px solid #f5e31a;box-sizing:border-box"></div>
<div style="position:absolute;left:921px;top:666px;width:324px;height:21px;background:#d4d4d4;"></div>
<div style="position:absolute;left:921px;top:666px;width:324px;height:1px;background:#a8a8a8;"></div>
<div class="t" style="left:928.7px;top:672.1800000000001px;font-size:12.3px;line-height:12.3px;color:#111;">[WEAPON] Heal SoldierMedic</div>
<div style="position:absolute;left:1106px;top:676px;width:139px;height:1px;background:#8a8a8a;"></div>
<div style="position:absolute;left:1106px;top:679px;width:139px;height:1px;background:#8a8a8a;"></div>
<div style="position:absolute;left:921px;top:687px;width:324px;height:111px;background:#333234;"></div>
<div style="position:absolute;left:921px;top:798px;width:324px;height:39px;background:#cfcfcf;"></div>
<svg style="position:absolute;left:1237px;top:803px;" width="10" height="16" viewBox="0 0 10 16"><circle cx="8" cy="8" r="7.5" fill="#1d6fd0"/><path d="M4,5 H9 V10 L6.5,8.5 L4,10 Z" fill="#fff"/></svg>
<div class="t" style="left:925.5px;top:829.58px;font-size:12.3px;line-height:12.3px;color:#111;">AssetBundle</div>
<div style="position:absolute;left:1016px;top:827px;width:175px;height:18px;background:#e4e4e4;border:1px solid #bdbdbd;box-sizing:border-box;border-radius:2px"></div>
<div class="t" style="left:1020px;top:829.58px;font-size:12.3px;line-height:12.3px;color:#111;">None</div>
<svg style="position:absolute;left:1176px;top:833px;" width="9" height="6" viewBox="0 0 9 6"><polygon points="0,0 8,0 4,5" fill="#444"/></svg>
<div style="position:absolute;left:1197.6px;top:827px;width:60px;height:18px;background:#e4e4e4;border:1px solid #bdbdbd;box-sizing:border-box;border-radius:2px"></div>
<div class="t" style="left:1201px;top:829.58px;font-size:12.3px;line-height:12.3px;color:#111;">None</div>
<svg style="position:absolute;left:1040px;top:710px;" width="110" height="60" viewBox="0 0 110 60"><svg viewBox="1040 710 110 60" width="110" height="60"><line x1="1052.5" y1="726" x2="1077" y2="730" stroke="#1c3a1c" stroke-width="1.1"/><line x1="1052.5" y1="724.5" x2="1052.5" y2="731" stroke="#1a301a" stroke-width="1.5"/><polygon points="1077,725 1090,727 1128,732 1130,743 1126,744 1086,737 1083,756 1078,756" fill="#194a19"/><polygon points="1085,737 1090,739 1093,755 1089,755" fill="#163e16"/><polygon points="1080,726 1128,732 1129,737 1086,733" fill="#226022"/><circle cx="1089.5" cy="731" r="1.1" fill="#c04a3a"/><circle cx="1094.5" cy="731.5" r="1.1" fill="#c04a3a"/><circle cx="1099" cy="732" r="1.1" fill="#c04a3a"/><polygon points="1101,731.5 1123,734 1123,735.8 1101,733.5" fill="#c04040" opacity="0.8"/><polygon points="1129,735 1143,740 1143,742 1129,742" fill="#205a20"/></svg></svg>
<div style="position:absolute;left:0px;top:472px;width:919px;height:2px;background:#9a9a9a;"></div>
<div style="position:absolute;left:0px;top:474px;width:919px;height:18.5px;background:#a8a8a8;"></div>
<div style="position:absolute;left:0px;top:474px;width:61.5px;height:19px;background:#cbcbcb;"></div>
<div style="position:absolute;left:0px;top:479px;width:2px;height:9px;background:#555;"></div>
<div class="t" style="left:5.3px;top:478.58px;font-size:12.3px;line-height:12.3px;color:#111;">Project</div>
<div style="position:absolute;left:62px;top:474px;width:0.8px;height:19px;background:#999;"></div>
<svg style="position:absolute;left:71px;top:477px;" width="11" height="11" viewBox="0 0 11 11"><rect x="0.5" y="0.5" width="10" height="10" rx="1" fill="#666"/><g stroke="#ddd" stroke-width="0.8"><line x1="2" y1="3" x2="9" y2="3"/><line x1="2" y1="5" x2="9" y2="5"/><line x1="2" y1="7" x2="9" y2="7"/><line x1="2" y1="9" x2="9" y2="9"/></g></svg>
<div class="t" style="left:87px;top:478.58px;font-size:12.3px;line-height:12.3px;color:#111;">Console</div>
<svg style="position:absolute;left:886px;top:478px;" width="9" height="10" viewBox="0 0 9 10"><path d="M2,5 V3 A2.5,2.5 0 0 1 7,3" fill="none" stroke="#444" stroke-width="1"/><rect x="0.8" y="5" width="7.5" height="4.5" fill="none" stroke="#444" stroke-width="1"/></svg>
<svg style="position:absolute;left:904px;top:478px;" width="4" height="11" viewBox="0 0 4 11"><circle cx="2" cy="1.5" r="1.1" fill="#444"/><circle cx="2" cy="5" r="1.1" fill="#444"/><circle cx="2" cy="8.5" r="1.1" fill="#444"/></svg>
<div style="position:absolute;left:0px;top:492.5px;width:919px;height:20.5px;background:#cbcbcb;"></div>
<div style="position:absolute;left:0px;top:512.5px;width:919px;height:1px;background:#a5a5a5;"></div>
<svg style="position:absolute;left:0px;top:497px;" width="12" height="10" viewBox="0 0 12 10"><rect x="0" y="4" width="2" height="2" fill="#444"/><polygon points="5,3 11,3 8,7" fill="#444"/></svg>
<div style="position:absolute;left:505.5px;top:496px;width:299px;height:14.5px;background:#f0f0f0;border:1px solid #b4b4b4;box-sizing:border-box;border-radius:4px"></div>
<svg style="position:absolute;left:511px;top:499px;" width="9" height="9" viewBox="0 0 9 9"><circle cx="3.5" cy="3.5" r="2.5" fill="none" stroke="#555" stroke-width="1"/><line x1="5.3" y1="5.3" x2="8" y2="8" stroke="#555" stroke-width="1.2"/></svg>
<div style="position:absolute;left:807px;top:493px;width:1px;height:20px;background:#a9a9a9;"></div>
<div style="position:absolute;left:833px;top:493px;width:1px;height:20px;background:#a9a9a9;"></div>
<div style="position:absolute;left:859px;top:493px;width:1px;height:20px;background:#a9a9a9;"></div>
<div style="position:absolute;left:885.5px;top:493px;width:1px;height:20px;background:#a9a9a9;"></div>
<svg style="position:absolute;left:813px;top:496px;" width="16" height="14" viewBox="0 0 16 14"><rect x="3" y="1" width="6" height="6" fill="#555"/><circle cx="4.5" cy="9" r="3.5" fill="#555"/><polygon points="9,5 12.5,11 6,11" fill="#555"/></svg>
<svg style="position:absolute;left:839px;top:497px;" width="14" height="12" viewBox="0 0 14 12"><path d="M2,6.5 L7.5,1 H12 V5.5 L6.5,11 Z" fill="#555"/><circle cx="10" cy="3" r="0.9" fill="#cbcbcb"/></svg>
<svg style="position:absolute;left:864px;top:496px;" width="14" height="14" viewBox="0 0 14 14"><polygon points="7,1.5 8.7,5.3 12.8,5.6 9.6,8.2 10.6,12.2 7,10 3.4,12.2 4.4,8.2 1.2,5.6 5.3,5.3" fill="#888"/></svg>
<svg style="position:absolute;left:890px;top:496px;" width="16" height="14" viewBox="0 0 16 14"><path d="M1,7 Q8,0 15,7 Q8,14 1,7 Z" fill="none" stroke="#333" stroke-width="1.1"/><circle cx="8" cy="7" r="2.3" fill="#333"/><line x1="3" y1="12.5" x2="13" y2="1.5" stroke="#333" stroke-width="1.2"/></svg>
<div class="t" style="left:906.5px;top:498.58px;font-size:12.3px;line-height:12.3px;color:#111;">2</div>
<div style="position:absolute;left:0px;top:513.5px;width:248px;height:323.5px;background:#c6c5c6;"></div>
<div style="position:absolute;left:248px;top:513.5px;width:13.5px;height:323.5px;background:#c2c1c2;"></div>
<div style="position:absolute;left:261.5px;top:513.5px;width:1px;height:323.5px;background:#9d9d9d;"></div>
<svg style="position:absolute;left:249px;top:514px;" width="12" height="8" viewBox="0 0 12 8"><polygon points="2,7 10,7 6,2.5" fill="#555"/></svg>
<div style="position:absolute;left:250.3px;top:687px;width:9.7px;height:81px;background:#9e9d9e;border-radius:5px"></div>
<div style="position:absolute;left:0;top:513.5px;width:248px;height:323.5px;overflow:hidden">
<svg style="position:absolute;left:85px;top:0.5px;" width="10" height="10" viewBox="0 0 10 10"><polygon points="1,0 8,4.5 1,9" fill="#888"/></svg>
<svg style="position:absolute;left:97.5px;top:0.0px;" width="14" height="12" viewBox="0 0 14 12"><path d="M0.5,1.5 H5 L6.5,3 H13.5 V11.5 H0.5 Z" fill="#555"/></svg>
<div class="t" style="left:115.2px;top:0.5800000000000001px;font-size:12.3px;line-height:12.3px;color:#111;letter-spacing:0.24px">_Dual</div>
<svg style="position:absolute;left:85px;top:16.519999999999982px;" width="10" height="10" viewBox="0 0 10 10"><polygon points="1,0 8,4.5 1,9" fill="#888"/></svg>
<svg style="position:absolute;left:97.5px;top:16.019999999999982px;" width="14" height="12" viewBox="0 0 14 12"><path d="M0.5,1.5 H5 L6.5,3 H13.5 V11.5 H0.5 Z" fill="#555"/></svg>
<div class="t" style="left:115.2px;top:16.59999999999998px;font-size:12.3px;line-height:12.3px;color:#111;letter-spacing:0.24px">_Melee</div>
<svg style="position:absolute;left:97.5px;top:32.039999999999964px;" width="14" height="12" viewBox="0 0 14 12"><path d="M0.5,1.5 H5 L6.5,3 H13.5 V11.5 H0.5 Z" fill="#555"/></svg>
<div class="t" style="left:115.2px;top:32.61999999999996px;font-size:12.3px;line-height:12.3px;color:#111;letter-spacing:0.24px">_Mortar</div>
<svg style="position:absolute;left:97.5px;top:48.059999999999945px;" width="14" height="12" viewBox="0 0 14 12"><path d="M0.5,1.5 H5 L6.5,3 H13.5 V11.5 H0.5 Z" fill="#555"/></svg>
<div class="t" style="left:115.2px;top:48.639999999999944px;font-size:12.3px;line-height:12.3px;color:#111;letter-spacing:0.24px">BR MK-II LMG</div>
<svg style="position:absolute;left:97.5px;top:64.08000000000004px;" width="14" height="12" viewBox="0 0 14 12"><path d="M0.5,1.5 H5 L6.5,3 H13.5 V11.5 H0.5 Z" fill="#555"/></svg>
<div class="t" style="left:115.2px;top:64.66000000000004px;font-size:12.3px;line-height:12.3px;color:#111;letter-spacing:0.24px">Flamethrower</div>
<svg style="position:absolute;left:97.5px;top:80.10000000000002px;" width="14" height="12" viewBox="0 0 14 12"><path d="M0.5,1.5 H5 L6.5,3 H13.5 V11.5 H0.5 Z" fill="#555"/></svg>
<div class="t" style="left:115.2px;top:80.68000000000002px;font-size:12.3px;line-height:12.3px;color:#111;letter-spacing:0.24px">Gatling Gun</div>
<svg style="position:absolute;left:97.5px;top:96.12px;" width="14" height="12" viewBox="0 0 14 12"><path d="M0.5,1.5 H5 L6.5,3 H13.5 V11.5 H0.5 Z" fill="#555"/></svg>
<div class="t" style="left:115.2px;top:96.7px;font-size:12.3px;line-height:12.3px;color:#111;letter-spacing:0.24px">Grenade Launcher</div>
<svg style="position:absolute;left:97.5px;top:112.13999999999999px;" width="14" height="12" viewBox="0 0 14 12"><path d="M0.5,1.5 H5 L6.5,3 H13.5 V11.5 H0.5 Z" fill="#555"/></svg>
<div class="t" style="left:115.2px;top:112.71999999999998px;font-size:12.3px;line-height:12.3px;color:#111;letter-spacing:0.24px">M-3 Submachine Gun</div>
<svg style="position:absolute;left:97.5px;top:128.15999999999997px;" width="14" height="12" viewBox="0 0 14 12"><path d="M0.5,1.5 H5 L6.5,3 H13.5 V11.5 H0.5 Z" fill="#555"/></svg>
<div class="t" style="left:115.2px;top:128.73999999999998px;font-size:12.3px;line-height:12.3px;color:#111;letter-spacing:0.24px">M-4 BurstFire</div>
<svg style="position:absolute;left:97.5px;top:144.18000000000006px;" width="14" height="12" viewBox="0 0 14 12"><path d="M0.5,1.5 H5 L6.5,3 H13.5 V11.5 H0.5 Z" fill="#555"/></svg>
<div class="t" style="left:115.2px;top:144.76000000000008px;font-size:12.3px;line-height:12.3px;color:#111;letter-spacing:0.24px">M-16 Rifle</div>
<svg style="position:absolute;left:97.5px;top:160.20000000000005px;" width="14" height="12" viewBox="0 0 14 12"><path d="M0.5,1.5 H5 L6.5,3 H13.5 V11.5 H0.5 Z" fill="#555"/></svg>
<div class="t" style="left:115.2px;top:160.78000000000006px;font-size:12.3px;line-height:12.3px;color:#111;letter-spacing:0.24px">M-20 Bazooka</div>
<svg style="position:absolute;left:97.5px;top:176.22000000000003px;" width="14" height="12" viewBox="0 0 14 12"><path d="M0.5,1.5 H5 L6.5,3 H13.5 V11.5 H0.5 Z" fill="#555"/></svg>
<div class="t" style="left:115.2px;top:176.80000000000004px;font-size:12.3px;line-height:12.3px;color:#111;letter-spacing:0.24px">M-43 Carbine Rifle</div>
<svg style="position:absolute;left:97.5px;top:192.24px;" width="14" height="12" viewBox="0 0 14 12"><path d="M0.5,1.5 H5 L6.5,3 H13.5 V11.5 H0.5 Z" fill="#555"/></svg>
<div class="t" style="left:115.2px;top:192.82000000000002px;font-size:12.3px;line-height:12.3px;color:#111;letter-spacing:0.24px">M-60 Light Machine Gun</div>
<svg style="position:absolute;left:97.5px;top:208.26px;" width="14" height="12" viewBox="0 0 14 12"><path d="M0.5,1.5 H5 L6.5,3 H13.5 V11.5 H0.5 Z" fill="#555"/></svg>
<div class="t" style="left:115.2px;top:208.84px;font-size:12.3px;line-height:12.3px;color:#111;letter-spacing:0.24px">M-500 Shotgun</div>
<svg style="position:absolute;left:97.5px;top:224.27999999999997px;" width="14" height="12" viewBox="0 0 14 12"><path d="M0.5,1.5 H5 L6.5,3 H13.5 V11.5 H0.5 Z" fill="#555"/></svg>
<div class="t" style="left:115.2px;top:224.85999999999999px;font-size:12.3px;line-height:12.3px;color:#111;letter-spacing:0.24px">M9-Pistol</div>
<svg style="position:absolute;left:97.5px;top:240.29999999999995px;" width="14" height="12" viewBox="0 0 14 12"><path d="M0.5,1.5 H5 L6.5,3 H13.5 V11.5 H0.5 Z" fill="#555"/></svg>
<div class="t" style="left:115.2px;top:240.87999999999997px;font-size:12.3px;line-height:12.3px;color:#111;letter-spacing:0.24px">M21 Sniper Rifle</div>
<svg style="position:absolute;left:97.5px;top:256.31999999999994px;" width="14" height="12" viewBox="0 0 14 12"><path d="M0.5,1.5 H5 L6.5,3 H13.5 V11.5 H0.5 Z" fill="#555"/></svg>
<div class="t" style="left:115.2px;top:256.8999999999999px;font-size:12.3px;line-height:12.3px;color:#111;letter-spacing:0.24px">Minigun</div>
<svg style="position:absolute;left:97.5px;top:272.3399999999999px;" width="14" height="12" viewBox="0 0 14 12"><path d="M0.5,1.5 H5 L6.5,3 H13.5 V11.5 H0.5 Z" fill="#555"/></svg>
<div class="t" style="left:115.2px;top:272.9199999999999px;font-size:12.3px;line-height:12.3px;color:#111;letter-spacing:0.24px">MP-5 Submachine Gun</div>
<svg style="position:absolute;left:97.5px;top:288.36px;" width="14" height="12" viewBox="0 0 14 12"><path d="M0.5,1.5 H5 L6.5,3 H13.5 V11.5 H0.5 Z" fill="#555"/></svg>
<div class="t" style="left:115.2px;top:288.94px;font-size:12.3px;line-height:12.3px;color:#111;letter-spacing:0.24px">P-8 Pistol</div>
<svg style="position:absolute;left:97.5px;top:304.38px;" width="14" height="12" viewBox="0 0 14 12"><path d="M0.5,1.5 H5 L6.5,3 H13.5 V11.5 H0.5 Z" fill="#555"/></svg>
<div class="t" style="left:115.2px;top:304.96px;font-size:12.3px;line-height:12.3px;color:#111;letter-spacing:0.24px">P-17 Sniper</div>
<svg style="position:absolute;left:97.5px;top:320.4px;" width="14" height="12" viewBox="0 0 14 12"><path d="M0.5,1.5 H5 L6.5,3 H13.5 V11.5 H0.5 Z" fill="#555"/></svg>
<div class="t" style="left:115.2px;top:320.97999999999996px;font-size:12.3px;line-height:12.3px;color:#111;letter-spacing:0.24px">Plastic Heal</div>
</div>
<div style="position:absolute;left:262.5px;top:513.5px;width:656.5px;height:20.5px;background:#d3d3d3;"></div>
<div style="position:absolute;left:262.5px;top:534px;width:656.5px;height:1px;background:#b8b8b8;"></div>
<div class="t" style="left:266.2px;top:518.38px;font-size:12.3px;line-height:12.3px;color:#111;">Assets</div>
<div class="t" style="left:321.5px;top:518.38px;font-size:12.3px;line-height:12.3px;color:#111;">AOT Assets</div>
<div class="t" style="left:404px;top:518.38px;font-size:12.3px;line-height:12.3px;color:#111;">Player</div>
<div class="t" style="left:458px;top:518.38px;font-size:12.3px;line-height:12.3px;color:#111;">_Items</div>
<div class="t" style="left:511.4px;top:518.38px;font-size:12.3px;line-height:12.3px;color:#111;">Player Weapon</div>
<div class="t" style="left:613.7px;top:518.38px;font-size:12.3px;line-height:12.3px;color:#111;">_Army Man</div>
<div class="t" style="left:693.8px;top:518.38px;font-size:12.3px;line-height:12.3px;color:#111;">Primary</div>
<svg style="position:absolute;left:310px;top:519px;" width="7" height="11" viewBox="0 0 7 11"><polyline points="1.5,1.5 5.5,5.5 1.5,9.5" fill="none" stroke="#777" stroke-width="1.2"/></svg>
<svg style="position:absolute;left:393.5px;top:519px;" width="7" height="11" viewBox="0 0 7 11"><polyline points="1.5,1.5 5.5,5.5 1.5,9.5" fill="none" stroke="#777" stroke-width="1.2"/></svg>
<svg style="position:absolute;left:447.8px;top:519px;" width="7" height="11" viewBox="0 0 7 11"><polyline points="1.5,1.5 5.5,5.5 1.5,9.5" fill="none" stroke="#777" stroke-width="1.2"/></svg>
<svg style="position:absolute;left:500px;top:519px;" width="7" height="11" viewBox="0 0 7 11"><polyline points="1.5,1.5 5.5,5.5 1.5,9.5" fill="none" stroke="#777" stroke-width="1.2"/></svg>
<svg style="position:absolute;left:604px;top:519px;" width="7" height="11" viewBox="0 0 7 11"><polyline points="1.5,1.5 5.5,5.5 1.5,9.5" fill="none" stroke="#777" stroke-width="1.2"/></svg>
<svg style="position:absolute;left:683.4px;top:519px;" width="7" height="11" viewBox="0 0 7 11"><polyline points="1.5,1.5 5.5,5.5 1.5,9.5" fill="none" stroke="#777" stroke-width="1.2"/></svg>
<svg style="position:absolute;left:745px;top:519px;" width="7" height="11" viewBox="0 0 7 11"><polyline points="1.5,1.5 5.5,5.5 1.5,9.5" fill="none" stroke="#777" stroke-width="1.2"/></svg>
<div class="t" style="left:755.3px;top:518.3px;font-size:12.4px;line-height:12.4px;color:#111;font-weight:bold;">Plastic Heal</div>
<div style="position:absolute;left:262.5px;top:535px;width:656.5px;height:292.5px;background:#c2c0c2;"></div>
<div style="position:absolute;left:278.9px;top:547px;width:57px;height:56.7px;background:#595959;"></div>
<div style="position:absolute;left:351.8px;top:547px;width:57px;height:56.7px;background:#4d4f55;"></div>
<div style="position:absolute;left:424.8px;top:547px;width:57px;height:56.7px;background:#595959;"></div>
<svg style="position:absolute;left:262px;top:535px;" width="400" height="90" viewBox="0 0 400 90"><svg viewBox="262 535 400 90" width="400" height="90"><line x1="292" y1="567.7" x2="302" y2="569.6" stroke="#2a6a2a" stroke-width="0.8"/><polygon points="301,569.6 318,572 323.5,574 323.5,577 312,577.5 305,576.5" fill="#1f6e1f"/><polygon points="301.5,570 305.5,571 306.5,581.6 302.5,582" fill="#1a5e1a"/><polygon points="305,575 308,576 309.5,581 306.5,581.5" fill="#1a5a1a"/><line x1="306" y1="572.5" x2="320.5" y2="574.3" stroke="#b0502a" stroke-width="1.1"/><line x1="359.6" y1="567.7" x2="373.5" y2="566.8" stroke="#2a5a2a" stroke-width="0.9"/><polygon points="372.6,565.9 400,570 406.7,574.3 400,576 390,575.2 378,574" fill="#1f6e1f"/><polygon points="372.6,566.5 378,567.5 380,581.6 374.5,582" fill="#1a5e1a"/><polygon points="378,573.5 381.5,574 383,580.6 379.5,581" fill="#175517"/><line x1="379" y1="568.8" x2="399" y2="571.4" stroke="#b0502a" stroke-width="1.2"/><line x1="432.6" y1="567" x2="445.5" y2="567.7" stroke="#d0d0d0" stroke-width="1"/><polygon points="445.5,565.9 475,571.4 475,574.3 450,573 446,572" fill="#b5b5b5"/><polygon points="446,572 450,573 453.8,581.6 449.5,581.6" fill="#202020"/><polygon points="450,573.5 453,574 456,580 453,580.6" fill="#404040"/></svg></svg>
<div style="position:absolute;left:495.7px;top:566.6px;width:61px;height:18px;background:#d2d2d2;border:1px solid #a8a8a8;box-sizing:border-box;border-radius:1px"></div>
<div style="position:absolute;left:568.8px;top:566.6px;width:61px;height:18px;background:#d2d2d2;border:1px solid #a8a8a8;box-sizing:border-box;border-radius:1px"></div>
<div style="position:absolute;left:504px;top:571.3px;width:23px;height:1.6px;background:#d0487a;"></div>
<svg style="position:absolute;left:568px;top:568px;" width="45" height="18" viewBox="0 0 45 18"><polygon points="2,5 40,3 40,8 24,9 23,16 19,16 20,9 10,8" fill="#7d7d7d"/></svg>
<svg style="position:absolute;left:474.7px;top:566.3px;" width="18" height="19" viewBox="0 0 18 19"><circle cx="9" cy="9.6" r="8" fill="#888" opacity="0.5"/><circle cx="9" cy="9" r="8" fill="#555"/><polygon points="6,4.5 13,9 6,13.5" fill="#f0f0f0"/></svg>
<svg style="position:absolute;left:547.5px;top:566.5px;" width="18" height="19" viewBox="0 0 18 19"><circle cx="9" cy="9.6" r="8" fill="#888" opacity="0.5"/><circle cx="9" cy="9" r="8" fill="#555"/><polygon points="6,4.5 13,9 6,13.5" fill="#f0f0f0"/></svg>
<svg style="position:absolute;left:620.6px;top:566.5px;" width="18" height="19" viewBox="0 0 18 19"><circle cx="9" cy="9.6" r="8" fill="#888" opacity="0.5"/><circle cx="9" cy="9" r="8" fill="#555"/><polygon points="6,4.5 13,9 6,13.5" fill="#f0f0f0"/></svg>
<div style="position:absolute;left:347.6px;top:609.3px;width:64.6px;height:11.5px;background:#bcbcbc;border-radius:2px"></div>
<div class="t" style="left:279.6px;top:609.8100000000001px;font-size:10.3px;line-height:10.3px;color:#111;letter-spacing:0.1px">[ITEM] [W...</div>
<div class="t" style="left:350.4px;top:609.8100000000001px;font-size:10.3px;line-height:10.3px;color:#111;letter-spacing:0.1px">[WEAPON]...</div>
<div class="t" style="left:426.7px;top:609.8100000000001px;font-size:10.3px;line-height:10.3px;color:#111;letter-spacing:0.1px">Plastic Gun</div>
<div class="t" style="left:497.8px;top:609.8100000000001px;font-size:10.3px;line-height:10.3px;color:#111;letter-spacing:0.1px">PlasticGun...</div>
<div class="t" style="left:570.8px;top:609.8100000000001px;font-size:10.3px;line-height:10.3px;color:#111;letter-spacing:0.1px">PlasticGun...</div>
<div style="position:absolute;left:262.5px;top:827.5px;width:654px;height:9.5px;background:#d3d3d3;"></div>
<div style="position:absolute;left:262.5px;top:827px;width:654px;height:1px;background:#a8a8a8;"></div>
<svg style="position:absolute;left:265px;top:831px;" width="14" height="8" viewBox="0 0 14 8"><polygon points="7,1 13,4 13,11 7,14 1,11 1,4" fill="#1a6fd1"/></svg>
<div class="t" style="left:282px;top:831.58px;font-size:12.3px;line-height:12.3px;color:#111;">Assets/AOT Assets/Player/_Items/Player Weapon/_Army Man/Primary/Plastic Heal/[WEAPON] Heal S...</div>
<svg style="position:absolute;left:871px;top:831px;" width="14" height="8" viewBox="0 0 14 8"><circle cx="7" cy="7" r="6" fill="#6a6a6a"/></svg>
<div style="position:absolute;left:287px;top:23px;width:1px;height:450px;background:#8e9aaa;"></div>
<div style="position:absolute;left:287px;top:472px;width:632px;height:1.5px;background:#8e9aaa;"></div></body></html>
